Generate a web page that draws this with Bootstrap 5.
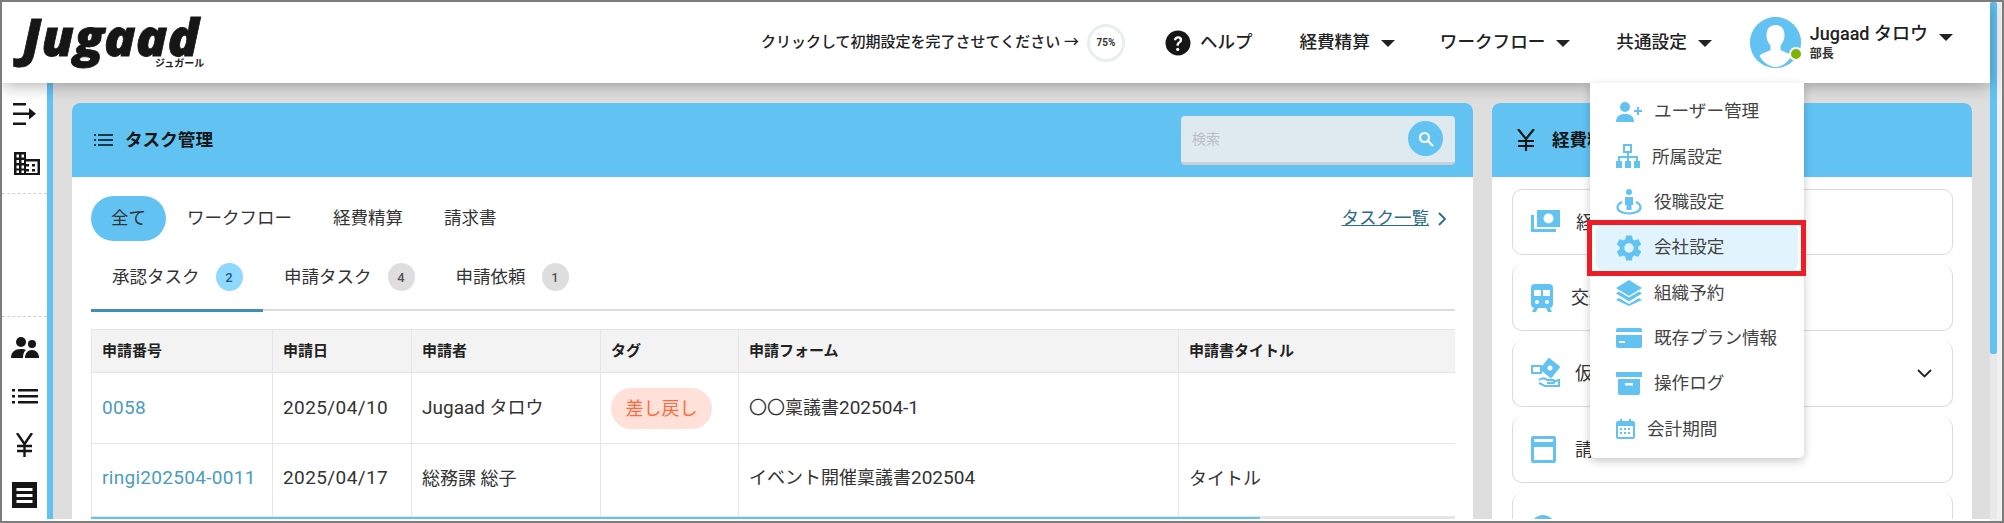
<!DOCTYPE html>
<html lang="ja">
<head>
<meta charset="utf-8">
<title>Jugaad</title>
<link href="https://cdn.jsdelivr.net/npm/bootstrap@5.3.0/dist/css/bootstrap.min.css" rel="stylesheet">
<style>
html,body{margin:0;height:523px;overflow:hidden;background:#fff}
body{font-family:Roboto,"Noto Sans CJK JP",sans-serif;color:#333}
.frame{width:2004px;height:523px;border:2px solid #7d7d7d;display:flex;position:relative;overflow:hidden;background:#fff}
.app{width:1988px;display:flex;flex-direction:column;height:517px}
.vscroll{width:12px;background:#f1f1f1;padding-right:5px}
.vthumb{height:352px;background:#62c3f3;border-radius:2px}
.vtrack{height:165px;background:#e9e9e9}

.topbar{height:81px;background:#fff;position:relative;z-index:5;box-shadow:0 2px 16px rgba(0,0,0,.32);padding:0 37px 0 0;flex:none}
.logo{position:absolute;left:20px;top:13px;width:190px;height:54px}
.logo-word{position:absolute;left:0;top:0;font:italic 800 52px/42px "Open Sans",sans-serif;letter-spacing:.2px;color:#161616;-webkit-text-stroke:.8px #161616;white-space:nowrap}
.logo-kana{position:absolute;left:133px;top:43px;font-size:10px;line-height:11px;font-weight:700;color:#222;white-space:nowrap}
.hint{font-size:15px;font-weight:500;color:#222;white-space:nowrap}
.ring{width:38px;height:38px;border:3px solid #e8efef;border-radius:50%;font-size:10px;font-weight:700;color:#333;margin-left:8px;margin-right:40px}
.helpl{font-size:17.5px;font-weight:500;color:#222;margin-left:9px;margin-right:47px}
.navi{font-size:17.6px;font-weight:500;color:#222;display:flex;align-items:center;white-space:nowrap}
.navi::after{content:"";border-top:7px solid #222;border-left:7px solid transparent;border-right:7px solid transparent;margin-left:11px;margin-top:2px}
.mr46{margin-right:46px}
.mr45{margin-right:45px}
.mr38{margin-right:38px}
.avatar{width:51px;height:51px;border-radius:50%;background:#62c3f3;position:relative;overflow:visible;flex:none;margin-top:-1px}
.avatar svg{border-radius:50%;display:block}
.dot{position:absolute;left:39px;top:30px;width:14px;height:14px;border-radius:50%;background:#7cb305;border:2px solid #fff}
.uname{margin-left:9px;line-height:1}
.uname b{display:block;font-weight:500;font-size:18px;color:#222;white-space:nowrap}
.latin{font-size:19px}
.uname .latin{font-size:18px}
.uname i{display:block;font-style:normal;font-weight:700;font-size:12px;color:#333;margin-top:5px}
.uname-caret{border-top:7px solid #222;border-left:7px solid transparent;border-right:7px solid transparent;margin-left:11px;margin-bottom:11px}

.body-row{flex:1 1 0;min-height:0;display:flex}
.side{width:45px;background:#fff;flex:none;display:flex;flex-direction:column;align-items:center;padding-top:20px}
.side svg{display:block;flex:none;color:#161616}
.dash{width:100%;border-top:1px dashed #cfcfcf;flex:none}
.stripe{width:6px;background:#62c3f3;flex:none}
.content{flex:1 1 0;min-width:0;background:#dedede;padding:20px 18px 0 19px;display:flex;gap:19px;overflow:hidden}
.panel{border:0;border-radius:8px 8px 0 0;overflow:hidden;background:#fff;flex:none}
.panel-a{width:1401px}
.panel-b{width:480px}
.panel-h{height:74px;flex:none;background:#62c3f3;border:0;border-radius:0!important;padding:0;display:flex;align-items:center;color:#161616;font-weight:700;font-size:17.6px}
.panel-a .panel-h{padding-left:22px;padding-right:18px}
.panel-b .panel-h{padding-left:25px}
.searchbox{width:274px;height:49px;background:#dfe9f0;border-bottom:3px solid #c9cfd3;border-radius:4px;display:flex;align-items:center;padding:0 12px 0 11px;margin-left:auto}
.searchbox input{background:transparent;border:0;box-shadow:none;padding:0;margin-top:2px;font-size:14px;height:auto;min-height:0}
.searchbox input::placeholder{color:#b9bfc4}
.sbtn{width:35px;height:35px;border-radius:50%;background:#62c3f3;flex:none;display:flex;align-items:center;justify-content:center}
.panel-a .card-body{padding:19px 18px 0 19px}

.pillrow{height:45px;margin-bottom:0}
.pill{font-size:17.5px;color:#333;border-radius:23px!important;padding:0;height:45px;display:flex;align-items:center;justify-content:center;background:none;border:0}
.pill.on{background:#62c3f3;color:#333;width:75px}
.alllink{margin-left:auto;font-size:17.5px;color:#2c6a86;display:flex;align-items:center;gap:9px;padding-right:9px}
.alllink span{color:#2c6a86;text-decoration:underline}
.tabsrow{height:70px;border-bottom:2px solid #dcdcdc;margin-top:0;padding:0}
.tabi{font-size:17.5px;color:#333;height:70px;display:flex;align-items:center;position:relative;padding-top:2px}
.tabi.on::after{content:"";position:absolute;left:0;right:0;bottom:-1px;height:3px;background:#3f8fb5}
.cnt{width:27px;height:28px;border-radius:50%;background:#dedede;color:#555;font-size:13px;font-weight:500;padding:0;display:flex;align-items:center;justify-content:center;margin-left:16px}
.cnt.on{background:#8fd8ff;color:#2c5a70}

.tscroll{margin-top:18px;width:1364px;overflow:hidden}
.tb{table-layout:fixed;width:1500px;margin:0;border-collapse:collapse;color:#333}
.tb th{background:#f3f3f3;font-size:15px;font-weight:700;color:#222;height:43px;padding:0 10px;border:1.5px solid #e6e6e6;vertical-align:middle}
.tb td{font-size:18px;padding:0 10px;border:1.5px solid #e6e6e6;vertical-align:middle;color:#333;white-space:nowrap}
.tb tr.r1 td{height:71px}
.tb tr.r2 td{height:73px;padding-bottom:3px}
.tb .tlink{color:#4a9cc0;text-decoration:none;font-size:19px;letter-spacing:.3px}
.tb td.num{font-size:19px;letter-spacing:.4px}
.tagp{display:inline-flex;align-items:center;justify-content:center;width:101px;height:41px;border-radius:21px;background:#ffe1d9;color:#ff6a3d;font-size:18px;font-weight:400}
.hbar{height:3px;background:#e4e4e4;width:1364px}
.hthumb{height:3px;background:#62c3f3;width:1169px}

.panel-b .card-body{padding:12px 19px 0 20px}
.acts{display:flex;flex-direction:column;gap:10px}
.acti{height:66px;flex:none;border:1.5px solid #dadada;border-radius:10px!important;display:flex;align-items:center;padding:0 0 0 18px;font-size:18px;color:#333;background:#fff}
.acti .lab{margin-left:16px}
.acti .chev{margin-left:auto;margin-right:20px}
.acti-last{align-items:flex-start;padding-top:22px}

.setmenu{display:block;position:absolute;left:1588px;top:81px;width:214px;height:375px;margin:0;padding:6px 0 0;border:0;border-radius:0 0 5px 5px;background:#fff;box-shadow:0 3px 10px rgba(0,0,0,.22);z-index:6}
.setmenu .dropdown-item{height:45.3px;padding:0 0 0 26px;display:flex;align-items:center;font-size:17.6px;color:#444;background:transparent;margin:0}
.setmenu .dropdown-item svg{flex:none;color:#62c3f3}
.setmenu .dropdown-item.hit{background:#e1f4fe;border-radius:6px;margin:0 6px;width:202px;padding-left:20px}
.redbox{position:absolute;left:1585px;top:218px;width:219px;height:56px;border:5px solid #ee1c25;z-index:7;pointer-events:none}
</style>
</head>
<body>
<div class="frame">
  <div class="app">
    <nav class="navbar topbar justify-content-end align-items-center flex-nowrap">
      <div class="logo"><span class="logo-word">Jugaad</span><span class="logo-kana">ジュガール</span></div>
      <span class="hint">クリックして初期設定を完了させてください →</span>
      <span class="ring d-flex align-items-center justify-content-center">75%</span>
      <svg width="26" height="26" viewBox="0 0 26 26"><circle cx="13" cy="13" r="12.5" fill="#161616"/><path d="M9 10.2c0-2.4 1.8-3.9 4.2-3.9s4 1.4 4 3.5c0 1.7-.9 2.5-2 3.3-.9.7-1.3 1.1-1.3 2.1v.5h-2.4v-.7c0-1.5.6-2.3 1.7-3.1.9-.7 1.5-1.1 1.5-2s-.7-1.5-1.6-1.5c-1 0-1.7.7-1.7 1.8z" fill="#fff"/><circle cx="12.7" cy="19.4" r="1.6" fill="#fff"/></svg>
      <span class="helpl">ヘルプ</span>
      <span class="navi mr45">経費精算</span>
      <span class="navi mr46">ワークフロー</span>
      <span class="navi mr38">共通設定</span>
      <div class="avatar">
        <svg width="51" height="51" viewBox="0 0 51 51"><circle cx="25.500" cy="25.500" r="25.500" fill="#62c3f3"/><path d="M25.500 8c-6 0-9 4.200-9 10 0 4.500 1.700 8.200 4 10.500v4.500c-3 2-9 3-11 6 4 7 10.500 11 16 11s12-4 16-11c-2-3-8-4-11-6v-4.500c2.300-2.300 4-6 4-10.500 0-5.800-3-10-9-10z" fill="#fff"/></svg>
        <span class="dot"></span>
      </div>
      <div class="uname"><b><span class="latin">Jugaad</span> タロウ</b><i>部長</i></div>
      <span class="uname-caret"></span>
    </nav>

    <div class="body-row">
      <aside class="side">
        <svg width="24" height="22" viewBox="0 0 24 22" fill="currentColor"><rect x="0" y="0" width="13" height="2.500"/><rect x="0" y="9.500" width="18" height="2.500"/><path d="M16 5l7 5.700-7 5.700z"/><rect x="0" y="19.500" width="13" height="2.500"/></svg>
        <svg style="margin-top:27px;margin-left:4px" width="26" height="23" viewBox="0 0 26 23" fill="currentColor"><path fill-rule="evenodd" d="M0 0h12v7h14v16H0zM2.500 2.500v3h2.500v-3zm5 0v3h2.500v-3zm-5 5.500v3h2.500v-3zm5 0v3h2.500v-3zm-5 5.500v3h2.500v-3zm5 0v3h2.500v-3zm-5 5v2.500h2.500v-2.500zm5 0v2.500h2.500v-2.500zM12 9.500v2.500h3v2.500h-3v2.500h3v2.500h-3v1.500h11.500v-11.500zM18 12h3v2.500h-3zm0 5h3v2.500h-3z"/></svg>
        <div class="dash" style="margin-top:18px"></div>
        <div class="dash" style="margin-top:122px"></div>
        <svg style="margin-top:20px" width="28" height="21" viewBox="0 0 28 21" fill="currentColor"><circle cx="10" cy="5" r="5"/><circle cx="21" cy="7" r="4"/><path d="M0 21c0-6 4-9 10-9 2 0 3.500.4 5 1-2 1.500-3 4-3 8z"/><path d="M14 21c0-5 3-8 7-8s7 3 7 8z"/></svg>
        <svg style="margin-top:31px" width="26" height="15" viewBox="0 0 26 15" fill="currentColor"><rect x="0" y="0" width="3" height="2.500"/><rect x="6" y="0" width="20" height="2.500"/><rect x="0" y="6" width="3" height="2.500"/><rect x="6" y="6" width="20" height="2.500"/><rect x="0" y="12" width="3" height="2.500"/><rect x="6" y="12" width="20" height="2.500"/></svg>
        <svg style="margin-top:29px" width="17" height="24" viewBox="0 0 17 24" fill="none" stroke="currentColor" stroke-width="2.400"><path d="M1 0l7.500 11L16 0M8.500 11v13M1 13h15M1 18h15"/></svg>
        <svg style="margin-top:25px" width="25" height="26" viewBox="0 0 25 26" fill="currentColor"><path fill-rule="evenodd" d="M0 0h25v26H0zM4.500 6v3h16V6zm0 6v3h16v-3zm0 6v3h16v-3z"/></svg>
      </aside>
      <div class="stripe"></div>
      <main class="content">
        <section class="card panel panel-a">
          <div class="card-header panel-h">
            <svg width="19" height="12" viewBox="0 0 19 12" fill="#1b3a4a" class="me-2"><rect width="2" height="2"/><rect x="4" width="15" height="2"/><rect y="5" width="2" height="2"/><rect x="4" y="5" width="15" height="2"/><rect y="10" width="2" height="2"/><rect x="4" y="10" width="15" height="2"/></svg>
            <span class="ms-1">タスク管理</span>
            <div class="searchbox">
              <input class="form-control" type="text" placeholder="検索" aria-label="検索">
              <span class="sbtn"><svg width="16" height="16" viewBox="0 0 16 16" fill="none" stroke="#fff" stroke-width="2.200"><circle cx="6.500" cy="6.500" r="4.500"/><path d="M10 10l5 5"/></svg></span>
            </div>
          </div>
          <div class="card-body">
            <ul class="nav pillrow align-items-center">
              <li class="nav-item"><a class="nav-link pill on">全て</a></li>
              <li class="nav-item" style="margin-left:21px"><a class="nav-link pill">ワークフロー</a></li>
              <li class="nav-item" style="margin-left:41px"><a class="nav-link pill">経費精算</a></li>
              <li class="nav-item" style="margin-left:41px"><a class="nav-link pill">請求書</a></li>
              <li class="alllink"><span>タスク一覧</span><svg width="8" height="14" viewBox="0 0 8 14" fill="none" stroke="#2c6a86" stroke-width="1.800"><path d="M1 1l6 6-6 6"/></svg></li>
            </ul>
            <div class="d-flex tabsrow">
              <div class="tabi on" style="width:172px;padding-left:21px">承認タスク<span class="badge cnt on">2</span></div>
              <div class="tabi" style="margin-left:21px">申請タスク<span class="badge cnt">4</span></div>
              <div class="tabi" style="margin-left:41px">申請依頼<span class="badge cnt">1</span></div>
            </div>
            <div class="tscroll">
              <table class="table tb">
                <colgroup><col style="width:181px"><col style="width:139px"><col style="width:189px"><col style="width:138px"><col style="width:440px"><col style="width:413px"></colgroup>
                <thead><tr><th>申請番号</th><th>申請日</th><th>申請者</th><th>タグ</th><th>申請フォーム</th><th>申請書タイトル</th></tr></thead>
                <tbody>
                  <tr class="r1"><td><a class="tlink" href="#">0058</a></td><td class="num">2025/04/10</td><td><span class="latin">Jugaad</span> タロウ</td><td><span class="tagp">差し戻し</span></td><td>〇〇稟議書<span class="latin">202504-1</span></td><td></td></tr>
                  <tr class="r2"><td><a class="tlink" href="#">ringi202504-0011</a></td><td class="num">2025/04/17</td><td>総務課 総子</td><td></td><td>イベント開催稟議書<span class="latin">202504</span></td><td>タイトル</td></tr>
                </tbody>
              </table>
              <div class="hbar"><div class="hthumb"></div></div>
            </div>
          </div>
        </section>
        <section class="card panel panel-b">
          <div class="card-header panel-h">
            <svg width="18" height="22" viewBox="0 0 18 22" fill="none" stroke="#161616" stroke-width="2.200"><path d="M1 0l8 10 8-10M9 10v12M1 12h16M1 17h16"/></svg>
            <span style="margin-left:17px">経費精算</span>
          </div>
          <div class="card-body">
            <div class="list-group acts">
              <div class="list-group-item acti">
                <svg width="29" height="24" viewBox="0 0 29 24" fill="#62c3f3"><path fill-rule="evenodd" d="M6 0h23v17H6zM17.500 3.500a5 5 0 1 0 0 10 5 5 0 0 0 0-10z"/><path d="M0 5h3v14h22v3H0z"/></svg>
                <span class="lab">経費</span>
              </div>
              <div class="list-group-item acti">
                <svg width="22" height="28" viewBox="0 0 22 28" fill="#62c3f3"><path fill-rule="evenodd" d="M4 0h14a4 4 0 0 1 4 4v16a4 4 0 0 1-4 4H4a4 4 0 0 1-4-4V4a4 4 0 0 1 4-4zM3 6v6h7V6zm9 0v6h7V6zM6 16a2 2 0 1 0 0 4 2 2 0 0 0 0-4zm10 0a2 2 0 1 0 0 4 2 2 0 0 0 0-4z"/><path d="M3 24h4l-2 4H1zM15 24h4l2 4h-4z"/></svg>
                <span class="lab" style="margin-left:18px">交通費</span>
              </div>
              <div class="list-group-item acti">
                <svg width="30" height="32" viewBox="0 0 30 32" fill="none" stroke="#62c3f3" stroke-width="2"><path d="M18 1l10 8-8 10-10-8z" fill="#62c3f3"/><circle cx="19" cy="10" r="2.500" fill="#fff" stroke="none"/><path d="M1 8h9v7H1z"/><path d="M8 22c3-2 6-2 8 0h6c2 0 2 3 0 3h-6M22 24l6-2v6H14l-6-3"/></svg>
                <span class="lab" style="margin-left:14px">仮払</span>
                <svg class="chev" width="15" height="9" viewBox="0 0 15 9" fill="none" stroke="#222" stroke-width="1.800"><path d="M1 1l6.500 6.500L14 1"/></svg>
              </div>
              <div class="list-group-item acti">
                <svg width="25" height="27" viewBox="0 0 25 27" fill="#62c3f3"><path fill-rule="evenodd" d="M2 0h21a2 2 0 0 1 2 2v23a2 2 0 0 1-2 2H2a2 2 0 0 1-2-2V2a2 2 0 0 1 2-2zM3 3v3h19V3zm0 8v13h19V11z"/></svg>
                <span class="lab" style="margin-left:19px">請求書</span>
              </div>
              <div class="list-group-item acti acti-last">
                <svg width="24" height="24" viewBox="0 0 24 24" fill="#62c3f3"><circle cx="12" cy="12" r="12"/></svg>
                <span class="lab">過去実績</span>
              </div>
            </div>
          </div>
        </section>
      </main>
    </div>
  </div>
  <div class="vscroll"><div class="vthumb"></div><div class="vtrack"></div></div>

  <div class="dropdown-menu setmenu">
    <a class="dropdown-item"><svg width="26" height="20" viewBox="0 0 26 20" fill="currentColor" style="margin-right:12px"><circle cx="9" cy="5" r="5"/><path d="M0 20c0-5.500 3.500-8 9-8s9 2.500 9 8z"/><path d="M21 5h2v3h3v2h-3v3h-2v-3h-3V8h3z"/></svg>ユーザー管理</a>
    <a class="dropdown-item"><svg width="24" height="25" viewBox="0 0 24 25" fill="currentColor" style="margin-right:12px"><path fill-rule="evenodd" d="M7 0h9v9h-3v3h9v5h2v7h-6v-7h2v-3h-7v3h2v7H9v-7h2v-3H4v3h2v7H0v-7h2v-5h9V9H7zm2 2v5h5V2z"/></svg>所属設定</a>
    <a class="dropdown-item"><svg width="26" height="26" viewBox="0 0 26 26" fill="currentColor" style="margin-right:12px"><circle cx="13" cy="3" r="3"/><path d="M9 8h8v8h-1.500v5h-5v-5H9z"/><path fill="none" stroke="currentColor" stroke-width="2.200" d="M6 13c-3 1.500-4.500 3.500-4.500 5.500 0 3.500 5 6 11.500 6s11.500-2.500 11.500-6c0-2-1.500-4-4.500-5.500"/></svg>役職設定</a>
    <a class="dropdown-item hit"><svg width="26" height="26" viewBox="2 2 20 20" fill="currentColor" style="margin-right:12px"><path d="M19.140 12.940c.04-.3.06-.61.06-.94 0-.32-.02-.64-.07-.94l2.030-1.580c.18-.14.23-.41.12-.61l-1.920-3.320c-.12-.22-.37-.29-.59-.22l-2.390.96c-.5-.38-1.030-.7-1.620-.94l-.36-2.540c-.04-.24-.24-.41-.48-.41h-3.840c-.24 0-.43.17-.47.41l-.36 2.540c-.59.24-1.130.57-1.620.94l-2.390-.96c-.22-.08-.47 0-.59.22L2.740 8.870c-.12.21-.08.47.12.61l2.030 1.580c-.05.3-.09.63-.09.94s.02.64.07.94l-2.030 1.580c-.18.14-.23.41-.12.61l1.920 3.320c.12.22.37.29.59.22l2.390-.96c.5.38 1.030.7 1.620.94l.36 2.540c.05.24.24.41.48.41h3.840c.24 0 .44-.17.47-.41l.36-2.540c.59-.24 1.130-.56 1.620-.94l2.390.96c.22.08.47 0 .59-.22l1.920-3.320c.12-.22.07-.47-.12-.61l-2.010-1.580zM12 15.600c-1.980 0-3.600-1.620-3.600-3.600s1.620-3.600 3.600-3.600 3.600 1.620 3.600 3.600-1.620 3.600-3.600 3.600z"/></svg>会社設定</a>
    <a class="dropdown-item"><svg width="26" height="26" viewBox="0 0 26 26" fill="currentColor" style="margin-right:12px"><path d="M13 0l13 8-13 8L0 8z"/><path d="M3 13l10 6 10-6 3 2-13 8-13-8z" transform="translate(0 -1.500)"/><path d="M3 18l10 6 10-6 3 2-13 6-13-6z"/></svg>組織予約</a>
    <a class="dropdown-item"><svg width="26" height="20" viewBox="0 0 26 20" fill="currentColor" style="margin-right:12px"><path fill-rule="evenodd" d="M2 0h22a2 2 0 0 1 2 2v2H0V2a2 2 0 0 1 2-2zM0 7h26v11a2 2 0 0 1-2 2H2a2 2 0 0 1-2-2zm3 6v2h6v-2z"/></svg>既存プラン情報</a>
    <a class="dropdown-item"><svg width="26" height="23" viewBox="0 0 26 23" fill="currentColor" style="margin-right:12px"><rect width="26" height="5"/><path fill-rule="evenodd" d="M2 7h22v14a2 2 0 0 1-2 2H4a2 2 0 0 1-2-2zm7 4v2.500h8V11z"/></svg>操作ログ</a>
    <a class="dropdown-item"><svg width="19" height="20" viewBox="0 0 19 20" fill="currentColor" style="margin-right:12px"><path fill-rule="evenodd" d="M4 0h2v2h7V0h2v2h2a2 2 0 0 1 2 2v14a2 2 0 0 1-2 2H2a2 2 0 0 1-2-2V4a2 2 0 0 1 2-2h2zM2 7v11h15V7zm2 2h2v2H4zm4 0h2v2H8zm4 0h2v2h-2zm-8 4h2v2H4zm4 0h2v2H8zm4 0h2v2h-2z"/></svg>会計期間</a>
  </div>
  <div class="redbox"></div>
</div>
<script src="https://cdn.jsdelivr.net/npm/bootstrap@5.3.0/dist/js/bootstrap.bundle.min.js"></script>
</body>
</html>
